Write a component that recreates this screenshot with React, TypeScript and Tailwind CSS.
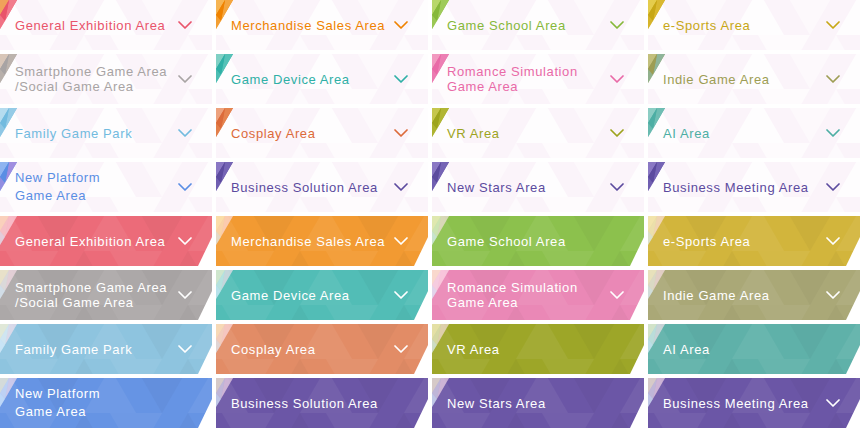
import React from "react";

type Area = {
  lines: string[];
  text: string;
  fill: string;
  tri: [string, string, string];
  wide?: boolean;
};

const areas: Area[] = [
  { lines: ["General Exhibition Area"], text: "text-[#e9546b]", fill: "bg-[#ec6b79]", tri: ["#f0a25a", "#e9546b", "#f27b8c"] },
  { lines: ["Merchandise Sales Area"], text: "text-[#ef8200]", fill: "bg-[#f29a32]", tri: ["#f6b553", "#ef8200", "#f4a640"] },
  { lines: ["Game School Area"], text: "text-[#86b83a]", fill: "bg-[#8cc14d]", tri: ["#b7d76a", "#86b83a", "#9fcb5a"] },
  { lines: ["e-Sports Area"], text: "text-[#c7a716]", fill: "bg-[#d2b53c]", tri: ["#e4cc4c", "#c7a716", "#d9b830"] },
  { lines: ["Smartphone Game Area", "/Social Game Area"], text: "text-[#a8a4a4]", fill: "bg-[#aca8a8]", tri: ["#d8c6b8", "#a8a4a4", "#bcb3ad"] },
  { lines: ["Game Device Area"], text: "text-[#2fb0a6]", fill: "bg-[#52bdb6]", tri: ["#7fd0c4", "#2fb0a6", "#55c2b7"] },
  { lines: ["Romance Simulation", "Game Area"], text: "text-[#e96aa7]", fill: "bg-[#ea88b6]", tri: ["#f29ac0", "#e96aa7", "#ec80b4"] },
  { lines: ["Indie Game Area"], text: "text-[#9d9d54]", fill: "bg-[#aaa877]", tri: ["#c2bf7c", "#9d9d54", "#8fb59a"] },
  { lines: ["Family Game Park"], text: "text-[#72bbdf]", fill: "bg-[#8ec4df]", tri: ["#b5dcef", "#72bbdf", "#95cbe6"] },
  { lines: ["Cosplay Area"], text: "text-[#dc6b3a]", fill: "bg-[#e28c66]", tri: ["#eda27d", "#dc6b3a", "#e5844f"] },
  { lines: ["VR Area"], text: "text-[#9da41e]", fill: "bg-[#9da628]", tri: ["#c5c64d", "#9da41e", "#b1b634"] },
  { lines: ["AI Area"], text: "text-[#4daea4]", fill: "bg-[#5fb1a9]", tri: ["#8ccdc4", "#4daea4", "#6fbdb3"] },
  { lines: ["New Platform", "Game Area"], text: "text-[#5a8ee4]", fill: "bg-[#6694e4]", tri: ["#8fb4f0", "#5a8ee4", "#a08ee0"], wide: true },
  { lines: ["Business Solution Area"], text: "text-[#5c4b9f]", fill: "bg-[#6b56a6]", tri: ["#8a78c4", "#5c4b9f", "#7564b5"] },
  { lines: ["New Stars Area"], text: "text-[#5c4b9f]", fill: "bg-[#6b56a6]", tri: ["#8a78c4", "#5c4b9f", "#7564b5"] },
  { lines: ["Business Meeting Area"], text: "text-[#5c4b9f]", fill: "bg-[#6b56a6]", tri: ["#8a78c4", "#5c4b9f", "#7564b5"] },
];

const solidChevron = [
  true, true, false, true,
  true, true, true, true,
  true, true, false, false,
  false, false, false, true,
];

function Chevron({ className }: { className: string }) {
  return (
    <svg width="14" height="8" viewBox="0 0 14 8" className={className} fill="none">
      <polyline points="1,1 7,7 13,1" stroke="currentColor" strokeWidth="1.7" strokeLinecap="round" strokeLinejoin="round" />
    </svg>
  );
}

function Corner({ colors, pastel }: { colors: [string, string, string]; pastel: boolean }) {
  if (pastel) {
    return (
      <svg width="17" height="29" viewBox="0 0 17 29" className="absolute left-0 top-0">
        <polygon points="0,0 17,0 0,29" fill="#ffffff" opacity="0.35" />
        <polygon points="0,0 9,0 0,15" fill="#fff4c8" opacity="0.55" />
        <polygon points="9,0 17,0 5,21" fill="#ffd8e6" opacity="0.45" />
        <polygon points="0,15 5,21 0,29" fill="#d6ecff" opacity="0.55" />
        <polygon points="0,15 9,0 5,21" fill="#ffffff" opacity="0.3" />
      </svg>
    );
  }
  return (
    <svg width="17" height="29" viewBox="0 0 17 29" className="absolute left-0 top-0">
      <polygon points="0,0 17,0 0,29" fill={colors[1]} />
      <polygon points="0,0 9,0 0,15" fill={colors[0]} />
      <polygon points="9,0 17,0 5,21" fill={colors[2]} />
      <polygon points="0,15 9,0 5,21" fill={colors[1]} />
      <polygon points="0,15 5,21 0,29" fill={colors[2]} opacity="0.8" />
    </svg>
  );
}

function Pattern({ id }: { id: string }) {
  return (
    <svg className="absolute inset-0 h-full w-full" aria-hidden="true">
      <rect width="100%" height="100%" fill={`url(#${id})`} />
    </svg>
  );
}

function LightCell({ a }: { a: Area }) {
  return (
    <div className="relative h-[50px] overflow-hidden bg-[#fbf4fa]">
      <Pattern id="triLight" />
      <Corner colors={a.tri} pastel={false} />
      <div className={`relative flex h-full items-center pl-[15px] pr-[20px] ${a.text}`}>
        <div className={`flex-1 text-[13px] tracking-[0.6px] ${a.wide ? "leading-[18px]" : "leading-[15px]"}`}>
          {a.lines.map((l) => (
            <div key={l} className="whitespace-nowrap">{l}</div>
          ))}
        </div>
        <Chevron className="shrink-0" />
      </div>
    </div>
  );
}

function SolidCell({ a, chevron }: { a: Area; chevron: boolean }) {
  return (
    <div className={`relative h-[50px] overflow-hidden [clip-path:polygon(0_0,100%_0,100%_42%,198px_100%,0_100%)] ${a.fill}`}>
      <Pattern id="triDark" />
      <Corner colors={a.tri} pastel={true} />
      <div className="relative flex h-full items-center pl-[15px] pr-[20px] text-white">
        <div className={`flex-1 text-[13px] tracking-[0.6px] ${a.wide ? "leading-[18px]" : "leading-[15px]"}`}>
          {a.lines.map((l) => (
            <div key={l} className="whitespace-nowrap">{l}</div>
          ))}
        </div>
        {chevron && <Chevron className="shrink-0" />}
      </div>
    </div>
  );
}

export default function App() {
  return (
    <div className="h-[428px] w-[860px] bg-white font-['Liberation_Sans',Arial,sans-serif]">
      <svg width="0" height="0" className="absolute">
        <defs>
          <pattern id="triLight" width="104" height="90" patternUnits="userSpaceOnUse" x="-20" y="-10">
            <polygon points="0,45 26,0 52,45" fill="#ffffff" opacity="0.8" />
            <polygon points="52,0 104,0 78,45" fill="#ffffff" opacity="0.45" />
            <polygon points="26,45 78,45 52,90" fill="#ffffff" opacity="0.65" />
            <polygon points="78,90 104,45 130,90" fill="#ffffff" opacity="0.5" />
            <polygon points="-26,90 0,45 26,90" fill="#ffffff" opacity="0.5" />
          </pattern>
          <pattern id="triDark" width="104" height="90" patternUnits="userSpaceOnUse" x="-20" y="-10">
            <polygon points="0,45 26,0 52,45" fill="#ffffff" opacity="0.06" />
            <polygon points="52,0 104,0 78,45" fill="#000000" opacity="0.03" />
            <polygon points="26,45 78,45 52,90" fill="#ffffff" opacity="0.05" />
            <polygon points="78,90 104,45 130,90" fill="#000000" opacity="0.03" />
            <polygon points="-26,90 0,45 26,90" fill="#000000" opacity="0.03" />
          </pattern>
        </defs>
      </svg>
      <div className="grid grid-cols-4 gap-1">
        {areas.map((a, i) => (
          <LightCell key={"l" + i} a={a} />
        ))}
        {areas.map((a, i) => (
          <SolidCell key={"s" + i} a={a} chevron={solidChevron[i]} />
        ))}
      </div>
    </div>
  );
}
